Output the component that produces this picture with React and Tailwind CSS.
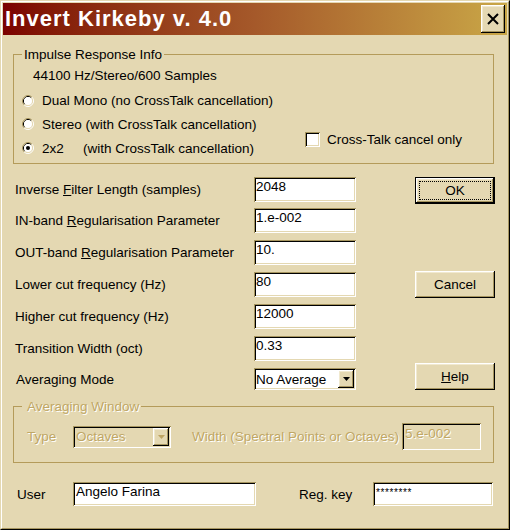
import React from 'react';

// Windows-classic "Wheat" look: beige face, dark-gold shadows
const sunken =
  'shadow-[inset_1px_1px_0_#a6955f,inset_-1px_-1px_0_#ffffff,inset_2px_2px_0_#000000,inset_-2px_-2px_0_#e4d8b2]';
const raised =
  'shadow-[inset_-1px_-1px_0_#000000,inset_1px_1px_0_#ffffff,inset_-2px_-2px_0_#a6955f,inset_2px_2px_0_#f1e9cf]';
const grayText = 'text-[#c0a765] [text-shadow:1px_1px_0_#ffffff]';

function Radio({ checked }) {
  return (
    <svg width="12" height="12" viewBox="0 0 12 12" className="shrink-0">
      <path d="M2.11 9.89 A5.5 5.5 0 0 1 9.89 2.11" fill="none" stroke="#a6955f" />
      <path d="M9.89 2.11 A5.5 5.5 0 0 1 2.11 9.89" fill="none" stroke="#ffffff" />
      <path d="M2.82 9.18 A4.5 4.5 0 0 1 9.18 2.82" fill="none" stroke="#000000" />
      <path d="M9.18 2.82 A4.5 4.5 0 0 1 2.82 9.18" fill="none" stroke="#e4d8b2" />
      <circle cx="6" cy="6" r="4" fill="#ffffff" />
      {checked && <circle cx="6" cy="6" r="2" fill="#000000" />}
    </svg>
  );
}

function Arrow({ disabled }) {
  return (
    <div className={`w-[16px] h-[18px] mr-[2px] bg-[#e4d8b2] flex items-center justify-center ${raised}`}>
      <svg width="7" height="4" viewBox="0 0 7 4">
        <polygon points="0,0 7,0 3.5,4" fill={disabled ? '#bda463' : '#000000'} />
      </svg>
    </div>
  );
}

function Field({ value, w = 'w-[102px]' }) {
  return (
    <div className={`${w} h-[25px] bg-white pl-[2px] pt-[2px] ${sunken}`}>{value}</div>
  );
}

function Row({ label, value, className = '' }) {
  return (
    <div className={`flex items-center ${className}`}>
      <div className="w-[239px]">{label}</div>
      <Field value={value} />
    </div>
  );
}

function Button({ children, isDefault, className = '' }) {
  return (
    <div className={`w-[80px] h-[27px] flex ${isDefault ? 'border border-black' : ''} ${className}`}>
      <div className={`flex-1 flex p-[3px] bg-[#e4d8b2] ${raised}`}>
        <div
          className={`flex-1 flex items-center justify-center ${
            isDefault ? 'border border-dotted border-black' : ''
          }`}
        >
          {children}
        </div>
      </div>
    </div>
  );
}

const u = 'underline underline-offset-[1px] decoration-1';

export default function App() {
  return (
    <div className="w-[510px] h-[530px] border border-t-[#e4d8b2] border-l-[#e4d8b2] border-r-black border-b-black bg-[#e4d8b2] font-['Liberation_Sans',Arial,sans-serif] text-[13.5px] leading-[15px] text-black">
      <div className="h-full border border-t-white border-l-white border-r-[#a6955f] border-b-[#a6955f] p-px">
        {/* title bar */}
        <div className="h-[32px] flex items-center justify-between bg-linear-to-r from-[#7b0000] via-[#a5592a] to-[#c9a747]">
          <span className="pl-[2px] text-white font-bold text-[22px] leading-[26px] tracking-[1px]">
            Invert Kirkeby v. 4.0
          </span>
          <div className={`w-[24px] h-[28px] mr-[2px] bg-[#e4d8b2] flex items-center justify-center ${raised}`}>
            <svg width="12" height="12" viewBox="0 0 12 12">
              <path d="M1 1 L11 11 M11 1 L1 11" stroke="#000" strokeWidth="2" />
            </svg>
          </div>
        </div>

        <div className="pl-[10px] pt-[12px]">
          {/* Impulse Response Info */}
          <fieldset className="w-[481px] border border-[#b49b5a] pb-[3px]">
            <legend className="ml-[8px] px-[2px] leading-[15px]">Impulse Response Info</legend>
            <div className="flex pl-[8px]">
              <div className="w-[283px]">
                <div className="mt-[6px] ml-[11px]">44100 Hz/Stereo/600 Samples</div>
                <div className="mt-[6px]">
                  <div className="h-[23px] flex items-center">
                    <Radio />
                    <span className="ml-[8px]">Dual Mono (no CrossTalk cancellation)</span>
                  </div>
                  <div className="h-[24px] flex items-center">
                    <Radio />
                    <span className="ml-[8px]">Stereo (with CrossTalk cancellation)</span>
                  </div>
                  <div className="h-[24px] flex items-center">
                    <Radio checked />
                    <span className="ml-[8px] w-[41px]">2x2</span>
                    <span>(with CrossTalk cancellation)</span>
                  </div>
                </div>
              </div>
              <div className="self-end mb-[13px] h-[16px] flex items-center">
                <div className={`w-[15px] h-[15px] bg-white ${sunken}`} />
                <span className="ml-[7px]">Cross-Talk cancel only</span>
              </div>
            </div>
          </fieldset>

          {/* parameters + buttons */}
          <div className="mt-[13px] flex">
            <div className="pl-[2px]">
              <Row
                label={<>Inverse <span className={u}>F</span>ilter Length (samples)</>}
                value="2048"
              />
              <Row
                className="mt-[6px]"
                label={<>IN-band <span className={u}>R</span>egularisation Parameter</>}
                value="1.e-002"
              />
              <Row
                className="mt-[7px]"
                label={<>OUT-band <span className={u}>R</span>egularisation Parameter</>}
                value="10."
              />
              <Row className="mt-[7px]" label="Lower cut frequency (Hz)" value="80" />
              <Row className="mt-[7px]" label="Higher cut frequency (Hz)" value="12000" />
              <Row className="mt-[7px]" label="Transition Width (oct)" value="0.33" />
              <div className="mt-[7px] flex items-center">
                <div className="w-[239px] pl-[1px]">Averaging Mode</div>
                <div className={`w-[102px] h-[22px] bg-white flex items-center ${sunken}`}>
                  <span className="flex-1 pl-[2px]">No Average</span>
                  <Arrow />
                </div>
              </div>
            </div>
            <div className="ml-[59px] flex flex-col">
              <Button isDefault>OK</Button>
              <Button className="mt-[67px]">Cancel</Button>
              <Button className="mt-[65px]">
                <span>
                  <span className={u}>H</span>elp
                </span>
              </Button>
            </div>
          </div>

          {/* Averaging Window (disabled) */}
          <fieldset className="mt-[9px] w-[481px] border border-[#b49b5a] pb-[12px]">
            <legend className={`ml-[8px] pl-[5px] pr-[2px] leading-[15px] ${grayText}`}>
              Averaging Window
            </legend>
            <div className={`mt-[9px] h-[27px] flex items-center pl-[13px] pr-[12px] ${grayText}`}>
              <span className="w-[46px]">Type</span>
              <div className={`w-[98px] h-[22px] flex items-center bg-[#e4d8b2] ${sunken}`}>
                <span className="flex-1 pl-[3px]">Octaves</span>
                <Arrow disabled />
              </div>
              <span className="ml-[21px]">Width (Spectral Points or Octaves)</span>
              <div className={`ml-auto w-[79px] h-[27px] pl-[3px] pt-[3px] bg-[#e4d8b2] ${sunken}`}>
                5.e-002
              </div>
            </div>
          </fieldset>

          {/* user / reg key */}
          <div className="mt-[19px] flex items-center pl-[4px]">
            <span className="w-[56px]">User</span>
            <div className={`w-[183px] h-[24px] bg-white pl-[3px] pt-[2px] ${sunken}`}>Angelo Farina</div>
            <span className="ml-[43px] w-[74px]">Reg. key</span>
            <div className={`w-[120px] h-[24px] bg-white pl-[3px] pt-[2px] ${sunken}`}>
              <span className="text-[10px] leading-[12px] tracking-[0.6px]">********</span>
            </div>
          </div>
        </div>
      </div>
    </div>
  );
}
